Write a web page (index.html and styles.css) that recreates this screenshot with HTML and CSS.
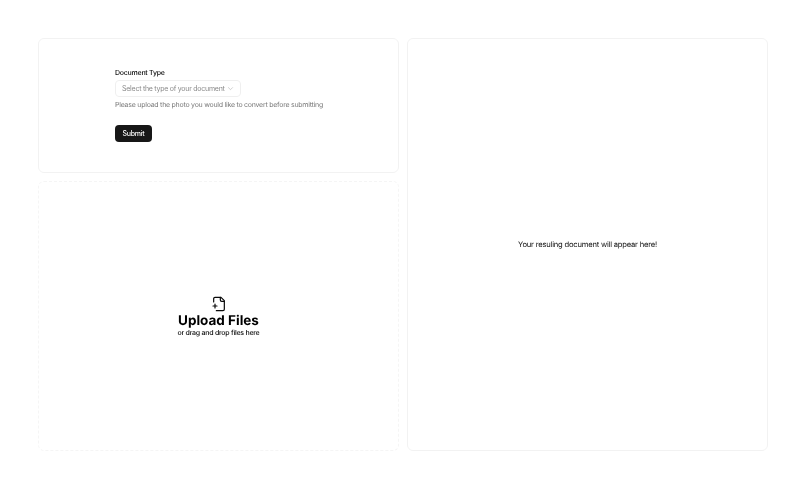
FILE: index.html
```html
<!DOCTYPE html>
<html lang="en">
<head>
<meta charset="utf-8">
<title>Document Converter</title>
<link rel="stylesheet" href="styles.css">
</head>
<body>
<main class="layout">
  <section class="left">
    <div class="card form-card">
      <form class="form">
        <label class="label">Document Type</label>
        <button type="button" class="select">
          <span>Select the type of your document</span>
          <svg class="chev" viewBox="0 0 24 24" fill="none" stroke="currentColor" stroke-width="1.6" stroke-linecap="round" stroke-linejoin="round"><path d="M5 9l7 7 7-7"/></svg>
        </button>
        <p class="help">Please upload the photo you would like to convert before submitting</p>
        <button type="button" class="submit">Submit</button>
      </form>
    </div>
    <div class="card drop">
      <svg class="file-icon" viewBox="0 0 24 24" fill="none" stroke="currentColor" stroke-width="1.8" stroke-linecap="round" stroke-linejoin="round"><path d="M8 22h10a2 2 0 0 0 2-2V7l-5-5H6a2 2 0 0 0-2 2v5"/><path d="M14 2v4a2 2 0 0 0 2 2h4"/><path d="M3 15h6"/><path d="M6 12v6"/></svg>
      <h2 class="drop-title">Upload Files</h2>
      <p class="drop-sub">or drag and drop files here</p>
    </div>
  </section>
  <section class="card result">
    <p class="result-text">Your resuling document will appear here!</p>
  </section>
</main>
</body>
</html>
```
FILE: styles.css
```css
* { box-sizing: border-box; }
html, body { margin: 0; height: 100%; }
body {
  background: #fff;
  color: #0a0a0a;
  font-family: Inter, "Liberation Sans", sans-serif;
  text-rendering: geometricPrecision;
  letter-spacing: -0.25px;
}
.layout {
  height: 489px;
  padding: 38px;
  display: grid;
  grid-template-columns: 1fr 1fr;
  gap: 8px;
  will-change: transform;
}
.left {
  display: grid;
  grid-template-rows: 135px 1fr;
  gap: 8px;
  min-height: 0;
}
.card {
  border: 1px solid #f2f2f2;
  border-radius: 6px;
}
.form-card {
  display: flex;
  justify-content: center;
  padding: 29px 0 0 1px;
}
.form { display: flex; flex-direction: column; align-items: flex-start; }
.label {
  font-size: 7px;
  line-height: 10px;
  font-weight: 500;
  color: #0a0a0a;
}
.select {
  margin-top: 2px;
  width: 126px;
  height: 17px;
  padding: 0 6px;
  display: flex;
  align-items: center;
  justify-content: space-between;
  background: transparent;
  border: 1px solid #efefef;
  border-radius: 4px;
  font: inherit;
  font-size: 7px;
  letter-spacing: inherit;
  color: #8a8a8a;
  white-space: nowrap;
}
.chev { width: 7px; height: 7px; color: #9a9a9a; flex: none; }
.help {
  margin: 3px 0 0;
  font-size: 7px;
  line-height: 10px;
  color: #7a7a7a;
  white-space: nowrap;
}
.submit {
  margin-top: 15px;
  width: 37px;
  height: 17px;
  padding: 0;
  border: 0;
  border-radius: 4px;
  background: #171717;
  color: #fafafa;
  font: inherit;
  font-size: 7px;
  font-weight: 500;
  letter-spacing: inherit;
}
.drop {
  border: 1px dashed #f5f5f5;
  display: flex;
  flex-direction: column;
  align-items: center;
  justify-content: center;
  padding-top: 1px;
}
.file-icon { width: 16px; height: 16px; display: block; }
.drop-title {
  margin: 1px 0 0;
  font-size: 13.5px;
  line-height: 16px;
  font-weight: 700;
  letter-spacing: 0;
  color: #000;
}
.drop-sub {
  margin: 0;
  font-size: 7px;
  line-height: 8px;
  font-weight: 500;
}
.result {
  display: flex;
  align-items: center;
  justify-content: center;
}
.result-text {
  margin: 0;
  font-size: 7.6px;
  letter-spacing: -0.2px;
  color: #111;
}
```
